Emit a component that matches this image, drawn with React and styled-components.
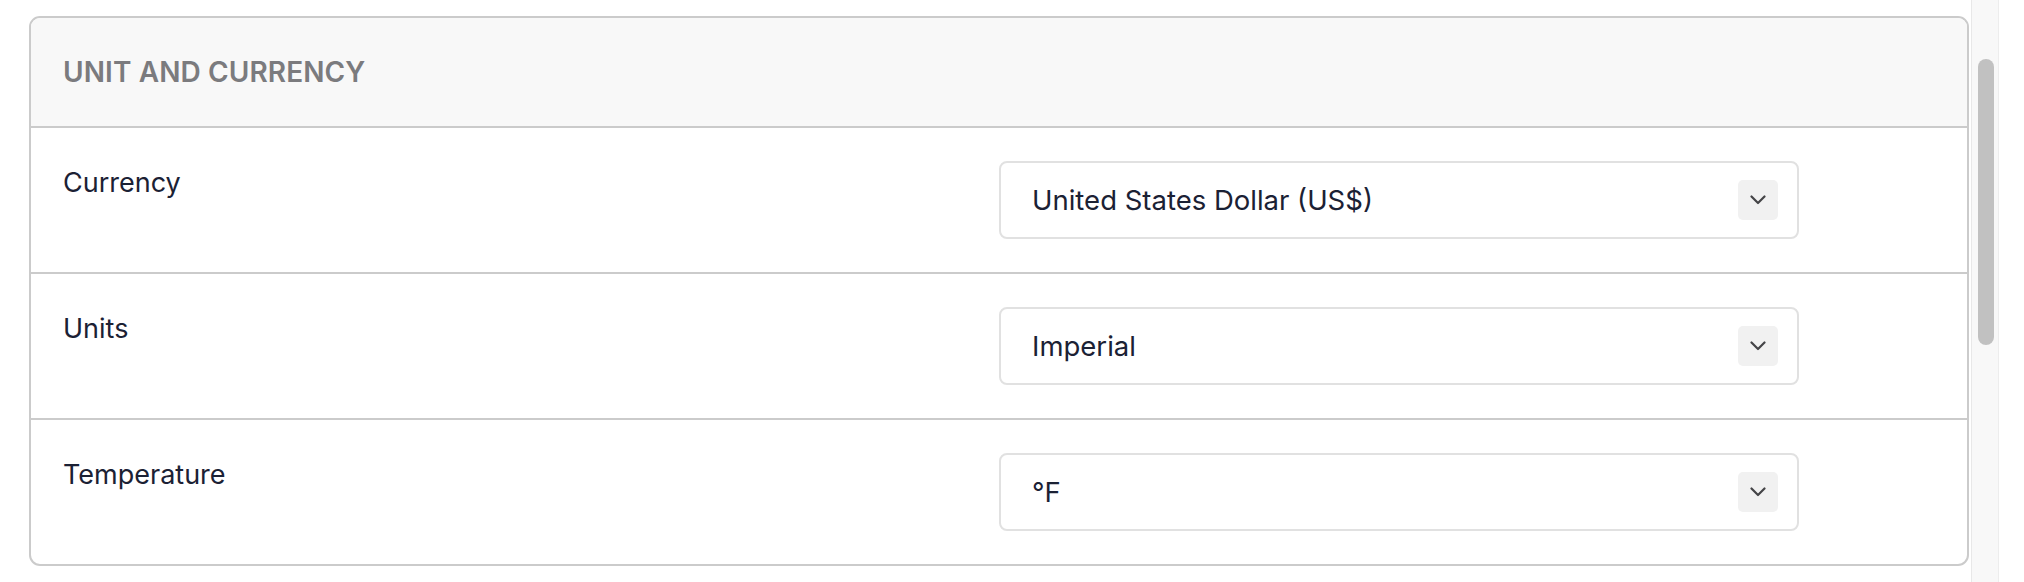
import React from "react";
import styled, { createGlobalStyle } from "styled-components";

const GlobalStyle = createGlobalStyle`
  html, body {
    margin: 0;
    padding: 0;
    background: #fff;
    font-family: Inter, "Noto Sans", "Liberation Sans", sans-serif;
    overflow: hidden;
  }
`;

const settings = [
  { id: "currency", label: "Currency", value: "United States Dollar (US$)" },
  { id: "units", label: "Units", value: "Imperial" },
  { id: "temperature", label: "Temperature", value: "°F" },
];

const ChevronDown = () => (
  <svg width="16" height="10" viewBox="0 0 16 10" fill="none">
    <path
      d="M1.5 1.5L8 8L14.5 1.5"
      stroke="#444447"
      strokeWidth="2.2"
      strokeLinecap="round"
      strokeLinejoin="round"
    />
  </svg>
);

const App = () => {
  return (
    <Page>
      <GlobalStyle />
      <Main>
        <Card>
          <Header>Unit and Currency</Header>
          {settings.map((s) => (
            <Row key={s.id}>
              <Label>{s.label}</Label>
              <Select type="button">
                <span>{s.value}</span>
                <Caret>
                  <ChevronDown />
                </Caret>
              </Select>
            </Row>
          ))}
        </Card>
      </Main>
      <Track>
        <Thumb />
      </Track>
    </Page>
  );
};

export default App;

const Page = styled.div`
  display: flex;
  width: 2024px;
  height: 582px;
`;

const Main = styled.div`
  width: 1971px;
  box-sizing: border-box;
  padding: 16px 2px 0 29px;
`;

const Card = styled.section`
  border: 2px solid #cbcbcb;
  border-radius: 11px;
  overflow: hidden;
  background: #fff;
`;

const Header = styled.h2`
  margin: 0;
  height: 108px;
  display: flex;
  align-items: center;
  padding: 0 32px;
  background: #f8f8f8;
  border-bottom: 2px solid #cbcbcb;
  font-size: 28px;
  font-weight: 600;
  letter-spacing: 0.1px;
  text-transform: uppercase;
  color: #7b7b7e;
`;

const Row = styled.div`
  display: grid;
  grid-template-columns: 1fr 1fr;
  padding: 33px 32px;
  border-bottom: 2px solid #cbcbcb;
  &:last-child {
    border-bottom: none;
  }
`;

const Label = styled.div`
  font-size: 27px;
  line-height: 43px;
  color: #1b2134;
`;

const Select = styled.button`
  width: 800px;
  height: 78px;
  box-sizing: border-box;
  display: flex;
  align-items: center;
  justify-content: space-between;
  padding: 0 19px 0 31px;
  background: #fff;
  border: 2px solid #e1e1e1;
  border-radius: 8px;
  font-family: inherit;
  font-size: 27.5px;
  color: #1b2134;
  text-align: left;
  cursor: pointer;
`;

const Caret = styled.span`
  width: 40px;
  height: 40px;
  display: flex;
  align-items: center;
  justify-content: center;
  background: #f1f1f1;
  border-radius: 5px;
`;

const Track = styled.div`
  width: 28px;
  height: 582px;
  box-sizing: border-box;
  background: #f8f8f8;
  border-left: 1px solid #e8e8e8;
  border-right: 1px solid #ededed;
  padding-top: 59px;
`;

const Thumb = styled.div`
  width: 16px;
  height: 286px;
  margin-left: 6px;
  border-radius: 8px;
  background: #c1c1c1;
`;
